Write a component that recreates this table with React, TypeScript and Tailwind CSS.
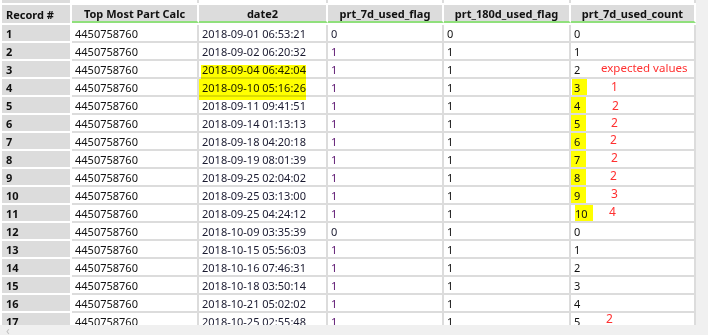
const rows: [string, string, string, string][] = [
  ["2018-09-01 06:53:21", "0", "0", "0"],
  ["2018-09-02 06:20:32", "1", "1", "1"],
  ["2018-09-04 06:42:04", "1", "1", "2"],
  ["2018-09-10 05:16:26", "1", "1", "3"],
  ["2018-09-11 09:41:51", "1", "1", "4"],
  ["2018-09-14 01:13:13", "1", "1", "5"],
  ["2018-09-18 04:20:18", "1", "1", "6"],
  ["2018-09-19 08:01:39", "1", "1", "7"],
  ["2018-09-25 02:04:02", "1", "1", "8"],
  ["2018-09-25 03:13:00", "1", "1", "9"],
  ["2018-09-25 04:24:12", "1", "1", "10"],
  ["2018-10-09 03:35:39", "0", "1", "0"],
  ["2018-10-15 05:56:03", "1", "1", "1"],
  ["2018-10-16 07:46:31", "1", "1", "2"],
  ["2018-10-18 03:50:14", "1", "1", "3"],
  ["2018-10-21 05:02:02", "1", "1", "4"],
  ["2018-10-25 02:55:48", "1", "1", "5"],
];

// red hand-written notes next to the count column
const notes = [
  { text: "1", x: 611, y: 79 },
  { text: "2", x: 612, y: 98 },
  { text: "2", x: 611, y: 115 },
  { text: "2", x: 610, y: 132 },
  { text: "2", x: 611, y: 150 },
  { text: "2", x: 610, y: 168 },
  { text: "3", x: 611, y: 186 },
  { text: "4", x: 609, y: 204 },
  { text: "2", x: 606, y: 311 },
];

function HeaderCell({ label, w }: { label: string; w: string }) {
  return (
    <div
      className={`${w} flex h-[18px] items-center justify-center border-r-2 border-b-2 border-r-white border-b-[#90e07c] bg-[#dcdcdc] pt-[1px] text-[11px] font-bold leading-none text-[#111]`}
    >
      {label}
    </div>
  );
}

function Cell({ children, w, className = "" }: { children: React.ReactNode; w: string; className?: string }) {
  return (
    <div
      className={`${w} relative h-[18px] border-r-2 border-b-2 border-[#dcdcdc] bg-white pl-[3px] pt-[1px] text-[11px] leading-[16px] ${className}`}
    >
      {children}
    </div>
  );
}

export default function App() {
  return (
    <div className="relative h-[335px] w-[708px] overflow-hidden bg-white font-['Noto_Sans',sans-serif]">
      <div className="flex h-[325px] overflow-hidden">
        <div className="h-[325px] w-[696px] overflow-hidden">
          {/* tail of the row above */}
          <div className="flex h-[5px] pl-[2px]">
            <div className="h-[3px] w-[70px] border-r-2 border-white bg-[#dcdcdc]" />
            <div className="h-[3px] w-[127px] border-r-2 border-[#dcdcdc]" />
            <div className="h-[3px] w-[129px] border-r-2 border-[#dcdcdc]" />
            <div className="h-[3px] w-[116px] border-r-2 border-[#dcdcdc]" />
            <div className="h-[3px] w-[127px] border-r-2 border-[#dcdcdc]" />
            <div className="h-[3px] w-[125px] border-r-2 border-[#dcdcdc]" />
          </div>

          <div className="flex pl-[2px]">
            <div className="flex h-[18px] w-[70px] items-center border-r-2 border-white bg-[#dcdcdc] pl-[4px] pt-[1px] text-[11px] font-bold leading-none text-[#111]">
              Record #
            </div>
            <HeaderCell label="Top Most Part Calc" w="w-[127px]" />
            <HeaderCell label="date2" w="w-[129px]" />
            <HeaderCell label="prt_7d_used_flag" w="w-[116px]" />
            <HeaderCell label="prt_180d_used_flag" w="w-[127px]" />
            <HeaderCell label="prt_7d_used_count" w="w-[125px]" />
          </div>
          <div className="h-[2px]" />

          {rows.map(([date, f7, f180, count], i) => {
            const n = i + 1;
            const marked = n >= 4 && n <= 11;
            return (
              <div key={n} className="flex pl-[2px]">
                <div className="h-[18px] w-[70px] border-r-2 border-b-2 border-white bg-[#dcdcdc] pl-[4px] pt-[1px] text-[11px] font-bold leading-[16px] text-[#111]">
                  {n}
                </div>
                <Cell w="w-[127px]" className="text-[#111]">4450758760</Cell>
                <Cell w="w-[129px]" className="text-[#1a1a30]">{date}</Cell>
                <Cell w="w-[116px]" className={f7 === "1" ? "text-[#5b1470]" : "text-[#1a1a30]"}>
                  {f7}
                </Cell>
                <Cell w="w-[127px]" className="text-[#111]">{f180}</Cell>
                <Cell w="w-[125px]" className="text-[#111]">
                  {marked && (
                    <span
                      className={`absolute top-0 h-[16px] bg-[#ffff00] ${
                        n === 11 ? "left-[4px] w-[18px]" : n === 4 ? "left-[1px] w-[15px]" : "left-0 w-[15px]"
                      }`}
                    />
                  )}
                  <span className={`relative ${n === 11 ? "pl-[1px]" : ""}`}>{count}</span>
                </Cell>
              </div>
            );
          })}
        </div>
        <div className="w-[12px] bg-[#f0f0f0]" />
      </div>

      {/* horizontal scrollbar */}
      <div className="flex h-[10px] items-start overflow-hidden bg-[#f0f0f0] pl-[6px]">
        <span className="text-[12px] leading-[12px] text-[#c0c0c0]">&lsaquo;</span>
      </div>

      {/* hand-drawn yellow marker on the two dates */}
      <div className="absolute left-[201px] top-[65px] h-[14px] w-[105px] bg-[#ffff00] mix-blend-multiply" />
      <div className="absolute left-[199px] top-[79px] h-[21px] w-[107px] bg-[#ffff00] mix-blend-multiply" />

      <span className="absolute left-[601px] top-[60px] text-[11.5px] leading-[16px] text-[#ff3030]">
        expected values
      </span>
      {notes.map((note, i) => (
        <span
          key={i}
          className="absolute text-[12px] leading-[16px] text-[#ff3030]"
          style={{ left: note.x, top: note.y }}
        >
          {note.text}
        </span>
      ))}
    </div>
  );
}
